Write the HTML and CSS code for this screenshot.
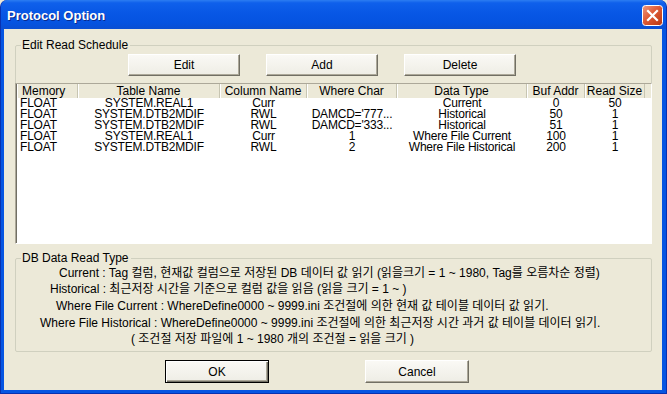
FILE: index.html
```html
<!DOCTYPE html>
<html lang="ko">
<head>
  <meta charset="UTF-8" />
  <title>Protocol Option</title>
  <link rel="stylesheet" href="styles.css">
</head>
<body>

  <div class="window">
    <div class="titlebar">
      <span class="title">Protocol Option</span>
      <div class="close-btn">
        <svg width="21" height="21" viewBox="0 0 21 21">
          <defs>
            <linearGradient id="closeGrad" x1="0" y1="0" x2="1" y2="1">
              <stop offset="0" stop-color="#EE9A80"/>
              <stop offset="0.45" stop-color="#DE5A36"/>
              <stop offset="1" stop-color="#B8360F"/>
            </linearGradient>
          </defs>
          <rect x="0.5" y="0.5" width="20" height="20" rx="3" fill="url(#closeGrad)" stroke="#fff"/>
          <path d="M6 6 L15 15 M15 6 L6 15" stroke="#fff" stroke-width="2.2" stroke-linecap="square"/>
        </svg>
      </div>
    </div>

    <div class="client">
      <fieldset class="group schedule">
        <legend>Edit Read Schedule</legend>

        <div class="toolbar">
          <button class="btn btn-edit">Edit</button>
          <button class="btn btn-add">Add</button>
          <button class="btn btn-delete">Delete</button>
        </div>

        <div class="listview">
          <div class="list-row list-head">
            <div class="cell left">Memory</div>
            <div class="cell">Table Name</div>
            <div class="cell">Column Name</div>
            <div class="cell">Where Char</div>
            <div class="cell">Data Type</div>
            <div class="cell">Buf Addr</div>
            <div class="cell">Read Size</div>
          </div>
          <div id="listBody"></div>
        </div>
      </fieldset>

      <fieldset class="group read-type">
        <legend>DB Data Read Type</legend>
        <p class="desc desc-current">Current : Tag 컬럼, 현재값 컬럼으로 저장된 DB 데이터 값 읽기 (읽을크기 = 1 ~ 1980, Tag를 오름차순 정렬)</p>
        <p class="desc desc-historical">Historical : 최근저장 시간을 기준으로 컬럼 값을 읽음 (읽을 크기 = 1 ~ )</p>
        <p class="desc desc-file-current">Where File Current : WhereDefine0000 ~ 9999.ini 조건절에 의한 현재 값 테이블 데이터 값 읽기.</p>
        <p class="desc desc-file-historical">Where File Historical : WhereDefine0000 ~ 9999.ini 조건절에 의한 최근저장 시간 과거 값 테이블 데이터 읽기.</p>
        <p class="desc desc-note">( 조건절 저장 파일에 1 ~ 1980 개의 조건절 = 읽을 크기 )</p>
      </fieldset>

      <div class="dialog-buttons">
        <button class="btn btn-default">OK</button>
        <button class="btn btn-cancel">Cancel</button>
      </div>
    </div>
  </div>

  <script>
    const schedule = [
      { memory: "FLOAT", table: "SYSTEM.REAL1", column: "Curr", where: "", type: "Current", addr: 0, size: 50 },
      { memory: "FLOAT", table: "SYSTEM.DTB2MDIF", column: "RWL", where: "DAMCD='777...", type: "Historical", addr: 50, size: 1 },
      { memory: "FLOAT", table: "SYSTEM.DTB2MDIF", column: "RWL", where: "DAMCD='333...", type: "Historical", addr: 51, size: 1 },
      { memory: "FLOAT", table: "SYSTEM.REAL1", column: "Curr", where: "1", type: "Where File Current", addr: 100, size: 1 },
      { memory: "FLOAT", table: "SYSTEM.DTB2MDIF", column: "RWL", where: "2", type: "Where File Historical", addr: 200, size: 1 }
    ];

    function renderSchedule(data) {
      const body = document.getElementById("listBody");
      body.innerHTML = "";

      data.forEach(item => {
        const row = document.createElement("div");
        row.className = "list-row";
        row.innerHTML = `
          <div class="cell left">${item.memory}</div>
          <div class="cell">${item.table}</div>
          <div class="cell">${item.column}</div>
          <div class="cell">${item.where}</div>
          <div class="cell">${item.type}</div>
          <div class="cell">${item.addr}</div>
          <div class="cell">${item.size}</div>
        `;
        body.appendChild(row);
      });
    }

    renderSchedule(schedule);
  </script>
</body>
</html>
```

FILE: styles.css
```css
body {
  margin: 0;
  width: 667px;
  height: 394px;
  overflow: hidden;
  font-family: "Liberation Sans", "Noto Sans CJK KR", sans-serif;
  font-size: 12px;
  color: #000;
  background-color: #ECE9D8;
}

.window {
  width: 667px;
  height: 394px;
  box-sizing: border-box;
  display: flex;
  flex-direction: column;
  background: #0655E2;
  border: 1px solid #0831B0;
  border-top: none;
  border-radius: 7px 7px 0 0;
}

.titlebar {
  height: 29px;
  flex-shrink: 0;
  display: flex;
  align-items: center;
  justify-content: space-between;
  padding: 0 3px 0 6px;
  border-radius: 7px 7px 0 0;
  background: linear-gradient(to bottom, #2C7DF2 0%, #0F60EB 10%, #0857E5 45%, #0553E0 80%, #0A4FD2 100%);
}

.title {
  color: #fff;
  font-weight: bold;
  font-size: 13px;
  text-shadow: 1px 1px 0 #0A2A8C;
  padding-top: 1px;
}

.close-btn {
  width: 21px;
  height: 21px;
  margin-top: 1px;
  display: flex;
}

.client {
  flex: 1;
  margin: 0 4px 3px 3px;
  padding: 0 10px 0 11px;
  background-color: #ECE9D8;
  display: flex;
  flex-direction: column;
}

/* group boxes */
.group {
  margin: 0;
  padding: 0;
  border: 1px solid #D0D0BF;
  border-radius: 2px;
  min-width: 0;
}

.group legend {
  margin-left: 5px;
  padding: 0 2px 0 1px;
  line-height: 14px;
}

.schedule {
  margin-top: 9px;
  height: 206px;
  box-sizing: border-box;
}

.toolbar {
  display: flex;
  gap: 26px;
  margin: 2px 0 7px 112px;
}

.btn {
  font-family: "Liberation Sans", sans-serif;
  font-size: 12px;
  color: #000;
  background: linear-gradient(to bottom, #FAF9F5, #EEEDE5);
  border: 1px solid;
  border-color: #fff #716F64 #716F64 #fff;
  box-shadow: inset -1px -1px 0 #ACA899;
  padding: 0;
  cursor: pointer;
}

.btn:hover {
  background: #F6F5EF;
}

.toolbar .btn {
  width: 112px;
  height: 22px;
}

/* list view */
.listview {
  margin: 0 -1px -1px -1px;
  height: 161px;
  box-sizing: border-box;
  background: #fff;
  border: 1px solid;
  border-color: #ACA899 #fff #fff #ACA899;
  box-shadow: inset 1px 1px 0 #716F64;
  padding: 0 0 0 1px;
}

.list-row {
  display: grid;
  grid-template-columns: 61px 142px 87px 90px 130px 58px 60px;
  height: 11px;
  line-height: 11px;
  letter-spacing: -0.2px;
}

.list-head {
  height: 14px;
  line-height: 14px;
  background: #ECE9D8;
  letter-spacing: 0;
}

.cell {
  text-align: center;
  white-space: nowrap;
}

.cell.left {
  text-align: left;
  padding-left: 3px;
}

.list-head .cell {
  border-right: 1px solid #C7C5B2;
  box-shadow: inset 1px 0 0 #fff;
}

.list-head .cell.left {
  padding-left: 5px;
}

/* read type descriptions */
.read-type {
  margin-top: 7px;
  padding-bottom: 4px;
}

.desc {
  margin: 0;
  line-height: 16px;
  white-space: nowrap;
}

.desc-current { padding-left: 43px; }
.desc-historical { padding-left: 34px; }
.desc-file-current { padding-left: 40px; margin-top: 1px; }
.desc-file-historical { padding-left: 24px; margin-top: 1px; }
.desc-note { padding-left: 115px; }

/* dialog buttons */
.dialog-buttons {
  display: flex;
  gap: 96px;
  margin: 8px 0 0 150px;
}

.dialog-buttons .btn {
  width: 104px;
  height: 23px;
}

.btn-default {
  border-color: #000;
  box-shadow: inset 1px 1px 0 #fff, inset -1px -1px 0 #716F64, inset -2px -2px 0 #ACA899;
}
```
